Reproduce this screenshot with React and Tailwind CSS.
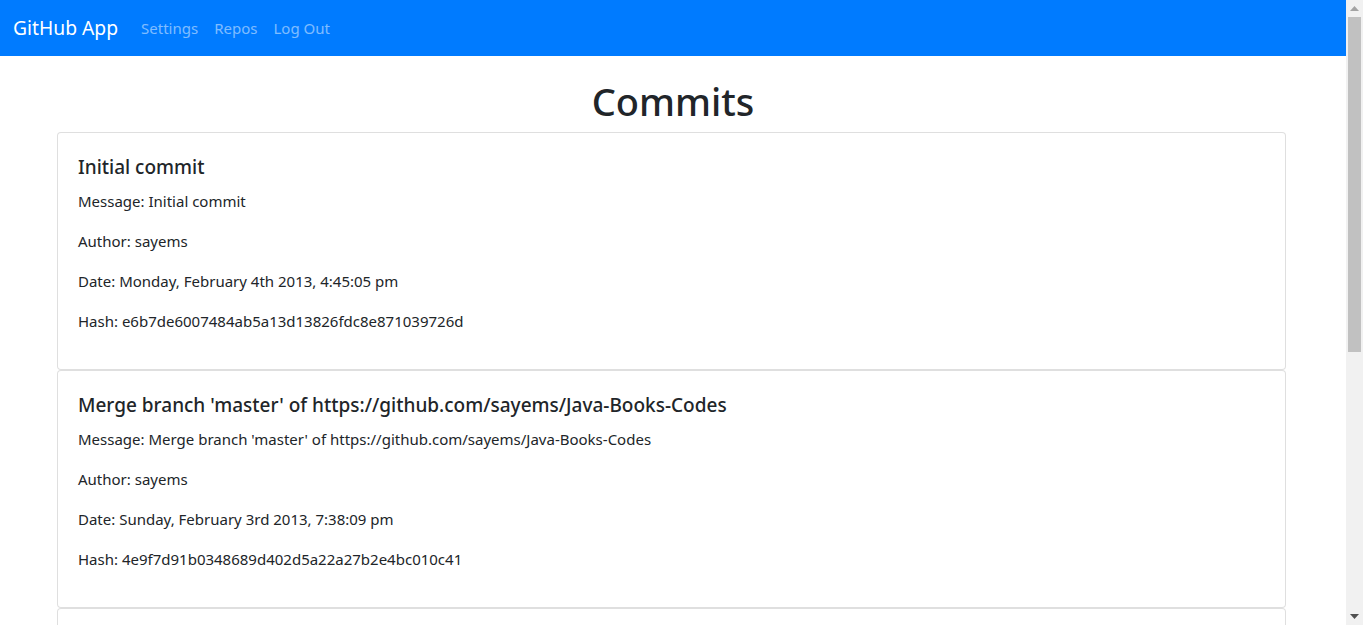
import React from "react";

const commits = [
  {
    title: "Initial commit",
    message: "Initial commit",
    author: "sayems",
    date: "Monday, February 4th 2013, 4:45:05 pm",
    hash: "e6b7de6007484ab5a13d13826fdc8e871039726d",
  },
  {
    title: "Merge branch 'master' of https://github.com/sayems/Java-Books-Codes",
    message: "Merge branch 'master' of https://github.com/sayems/Java-Books-Codes",
    author: "sayems",
    date: "Sunday, February 3rd 2013, 7:38:09 pm",
    hash: "4e9f7d91b0348689d402d5a22a27b2e4bc010c41",
  },
  {
    title: "Update README.md",
    message: "Update README.md",
    author: "sayems",
    date: "Sunday, February 3rd 2013, 7:30:12 pm",
    hash: "1a2b3c4d5e6f7a8b9c0d1e2f3a4b5c6d7e8f9a0b",
  },
];

function Scrollbar() {
  return (
    <div className="w-[17px] h-full bg-[#f1f1f1] flex flex-col items-center shrink-0">
      <div className="h-[17px] w-full flex items-center justify-center">
        <svg width="9" height="5" viewBox="0 0 9 5">
          <path d="M4.5 0 L9 5 L0 5 Z" fill="#a3a3a3" />
        </svg>
      </div>
      <div className="h-[335px] w-[13px] bg-[#c1c1c1]" />
      <div className="flex-1" />
      <div className="h-[17px] w-full flex items-center justify-center">
        <svg width="9" height="5" viewBox="0 0 9 5">
          <path d="M0 0 L9 0 L4.5 5 Z" fill="#505050" />
        </svg>
      </div>
    </div>
  );
}

export default function App() {
  return (
    <div
      className="h-screen flex overflow-hidden bg-white text-[#212529]"
      style={{ fontFamily: '"Noto Sans", "Open Sans", sans-serif' }}
    >
      <div className="w-[1346px] h-full overflow-hidden shrink-0">
        <nav className="h-14 bg-[#007bff] flex items-center px-[13px]">
          <span className="text-white text-[19.3px] leading-[30px] mr-[23px]">GitHub App</span>
          <div className="flex items-center gap-[16px] text-[15px] text-white/50">
            <span>Settings</span>
            <span>Repos</span>
            <span>Log Out</span>
          </div>
        </nav>
        <h1 className="text-center text-[38px] leading-[48px] font-medium mt-[21px] mb-[7px]">Commits</h1>
        <div className="ml-[57px] w-[1229px] flex flex-col">
          {commits.map((c, i) => (
            <div key={i} className="border border-black/[0.125] rounded-[4px] bg-white">
              <div className="p-5">
                <h5 className="text-[19px] leading-[24px] font-medium pt-[2px] mb-[10px]">{c.title}</h5>
                <p className="text-[15px] leading-[24px] mb-4">Message: {c.message}</p>
                <p className="text-[15px] leading-[24px] mb-4">Author: {c.author}</p>
                <p className="text-[15px] leading-[24px] mb-4">Date: {c.date}</p>
                <p className="text-[15px] leading-[24px] mb-4">Hash: {c.hash}</p>
              </div>
            </div>
          ))}
        </div>
      </div>
      <Scrollbar />
    </div>
  );
}
